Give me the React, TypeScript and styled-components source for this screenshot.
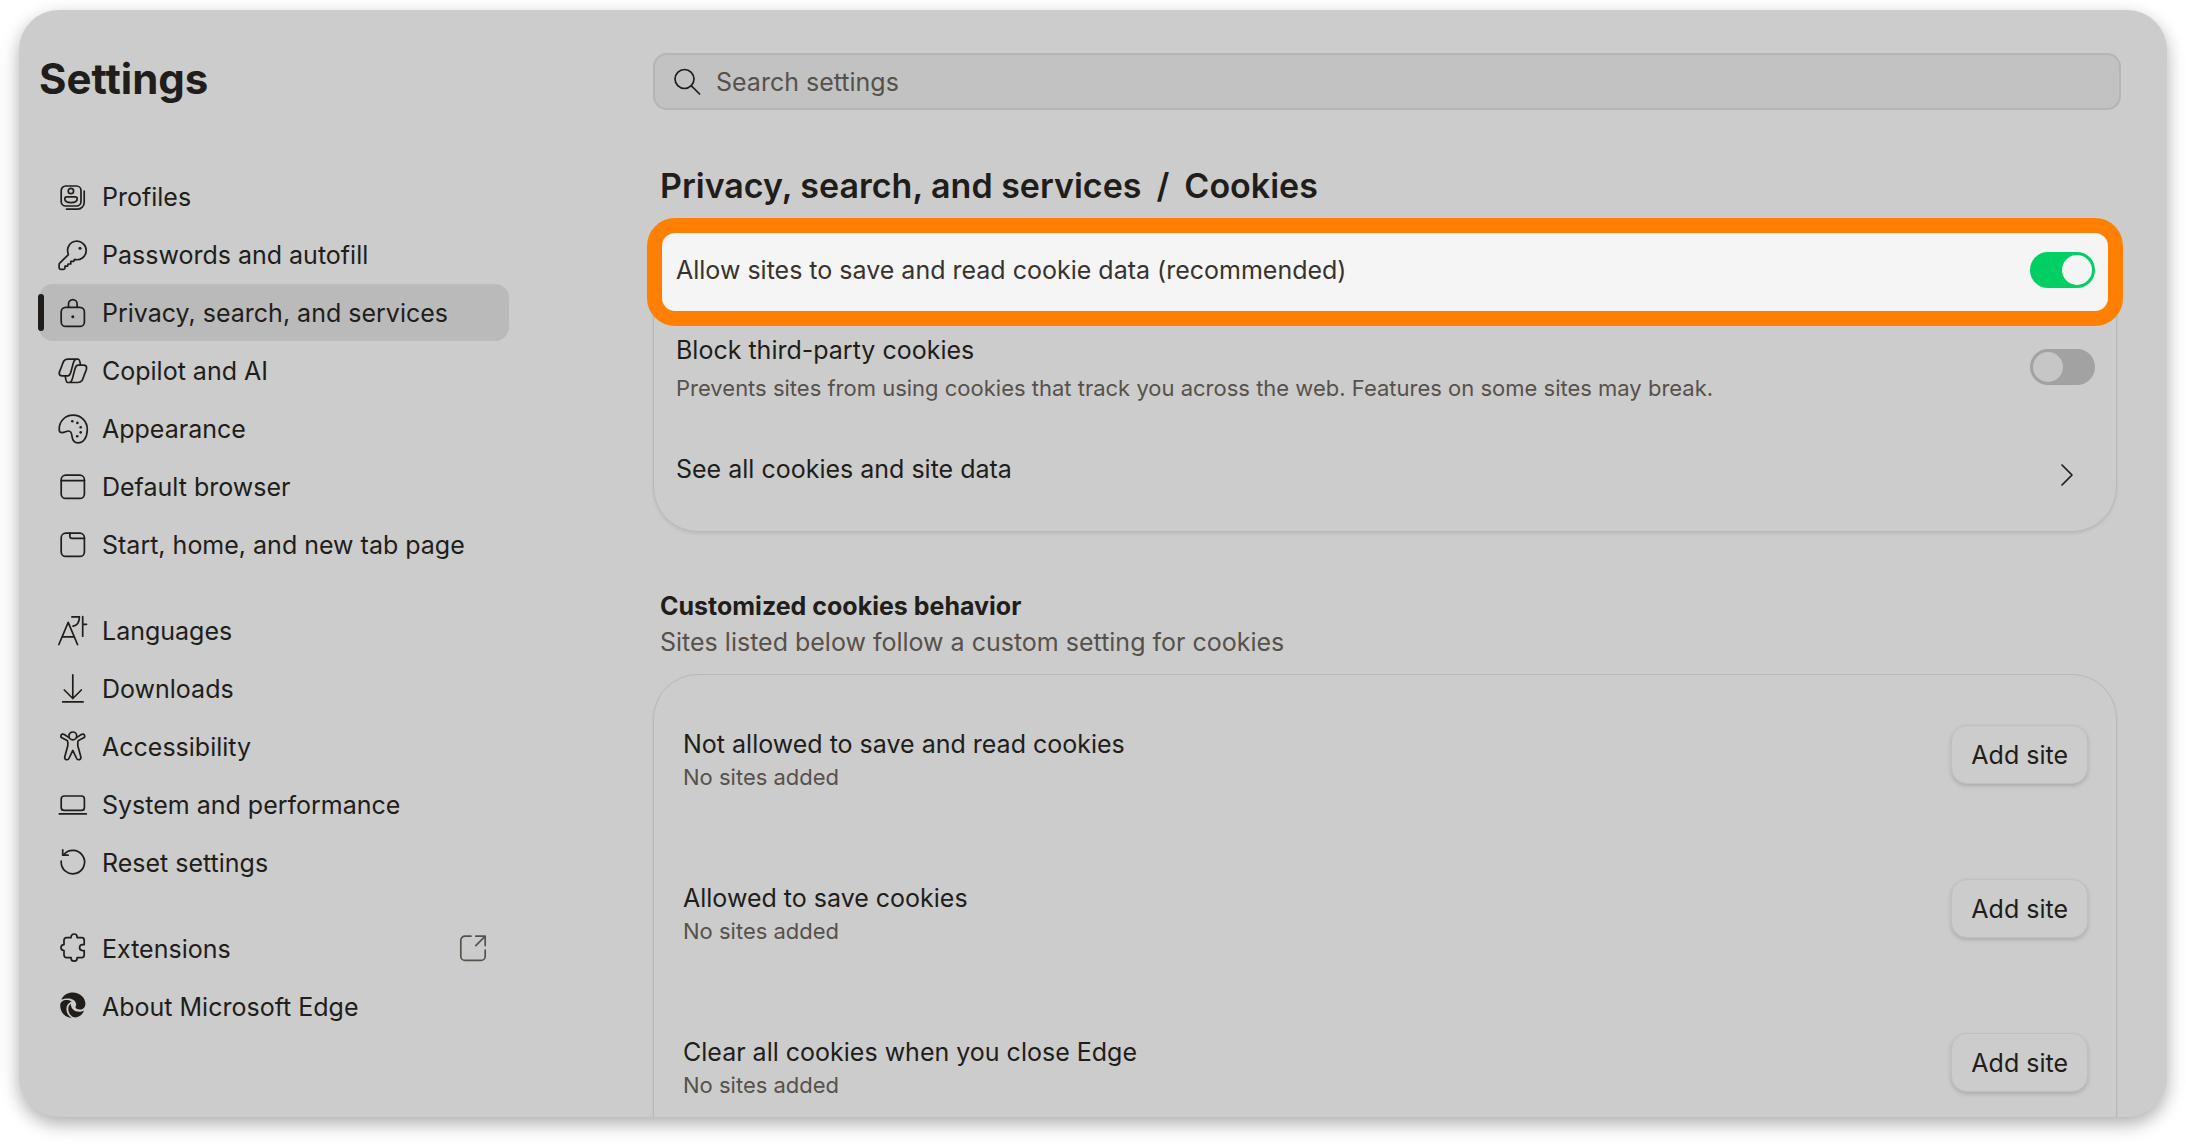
import React, { useState } from "react";
import type { ReactNode } from "react";
import styled, { createGlobalStyle, css } from "styled-components";

const ink = "#211d1a";
const muted = "#57514b";
const surface = "#cccccc";

const GlobalStyle = createGlobalStyle`
  *, *::before, *::after { box-sizing: border-box; }
  body {
    margin: 0;
    background: #ffffff;
    color: ${ink};
    font-family: Inter, "Liberation Sans", sans-serif;
    font-size: 25px;
  }
  h1, h2, h3, p, ul { margin: 0; padding: 0; }
  ul { list-style: none; }
`;

const Page = styled.div`
  height: 100vh;
  padding: 10px 19px 28px;
`;

const Window = styled.div`
  display: grid;
  grid-template-columns: 614px minmax(0, 1fr);
  height: 100%;
  overflow: hidden;
  border-radius: 40px;
  background: ${surface};
  box-shadow: 0 7px 18px rgba(0, 0, 0, 0.32);
`;

const Sidebar = styled.aside`
  padding: 45px 124px 0 20px;
`;

const AppTitle = styled.h1`
  margin-bottom: 65px;
  font-size: 42px;
  font-weight: 700;
  line-height: 48px;
`;

const Nav = styled.nav`
  display: flex;
  flex-direction: column;
  gap: 28px;
`;

const NavItem = styled.li`
  padding-bottom: 1px;
`;

const NavLink = styled.a<{ $active?: boolean }>`
  position: relative;
  display: flex;
  align-items: center;
  gap: 13px;
  height: 57px;
  padding: 0 20px 0 18px;
  border-radius: 14px;
  color: inherit;
  text-decoration: none;
  white-space: nowrap;
  ${(p) =>
    p.$active &&
    css`
      background: #bababa;
      &::before {
        content: "";
        position: absolute;
        left: -1px;
        top: 10px;
        bottom: 10px;
        width: 6px;
        border-radius: 3px;
        background: ${ink};
      }
    `}
`;

const NavText = styled.span`
  flex: 1;
`;

const Icon = styled.svg<{ $muted?: boolean }>`
  flex: none;
  width: 32px;
  height: 32px;
  fill: none;
  stroke: ${(p) => (p.$muted ? muted : ink)};
  stroke-width: 1.7;
  stroke-linecap: round;
  stroke-linejoin: round;
`;

const Main = styled.main`
  padding: 43px 46px 0 20px;
  overflow: hidden;
`;

const SearchBox = styled.label`
  display: flex;
  align-items: center;
  gap: 12px;
  height: 57px;
  padding: 0 17px;
  border: 2px solid #b5b5b5;
  border-radius: 14px;
  background: #c2c2c2;
`;

const SearchInput = styled.input`
  flex: 1;
  min-width: 0;
  padding: 0;
  border: 0;
  outline: 0;
  background: none;
  color: ${ink};
  font: inherit;
  &::placeholder {
    color: ${muted};
    opacity: 1;
  }
`;

const Content = styled.div`
  padding-right: 4px;
`;

const Breadcrumb = styled.h2`
  display: flex;
  gap: 15px;
  margin: 56px 0 20px;
  padding-left: 7px;
  font-size: 34px;
  font-weight: 600;
  line-height: 40px;
`;

const Card = styled.section`
  border: 1px solid #b8b8b8;
  border-radius: 45px;
  box-shadow: 0 2px 3px rgba(0, 0, 0, 0.08);
`;

const SettingRow = styled.div`
  display: flex;
  align-items: center;
  justify-content: space-between;
  min-height: 82px;
  padding: 0 21px 0 22px;
`;

const HighlightedRow = styled(SettingRow)`
  min-height: 108px;
  margin: -9px -7px 0;
  padding: 0 13px 4px 14px;
  border: 15px solid #ff8000;
  border-radius: 28px;
  background: #f5f5f5;
  color: #38322f;
`;

const Label = styled.label`
  display: block;
  line-height: 36px;
`;

const Description = styled.p`
  color: ${muted};
  font-size: 22px;
  line-height: 28px;
`;

const SpacedDescription = styled(Description)`
  padding-top: 6px;
`;

const Switch = styled.input`
  appearance: none;
  flex: none;
  display: flex;
  align-items: center;
  width: 65px;
  height: 36px;
  margin: 0;
  padding: 3px;
  border-radius: 18px;
  background: #a2a2a2;
  cursor: pointer;
  &::before {
    content: "";
    width: 30px;
    height: 30px;
    border-radius: 50%;
    background: #c6c6c6;
  }
  &:checked {
    justify-content: flex-end;
    background: #00cf64;
  }
  &:checked::before {
    background: #f5f5f5;
  }
`;

const RowLink = styled.a`
  display: flex;
  align-items: flex-start;
  justify-content: space-between;
  padding: 46px 21px 35px 22px;
  color: inherit;
  line-height: 30px;
  text-decoration: none;
`;

const ChevronBox = styled.span`
  display: flex;
  align-items: center;
  justify-content: center;
  width: 56px;
  height: 42px;
`;

const SectionHead = styled.header`
  margin: 56px 0 14px;
  padding-left: 7px;
  line-height: 36px;
`;

const SectionTitle = styled.h3`
  font-size: 25px;
  font-weight: 700;
`;

const SectionNote = styled.p`
  color: ${muted};
`;

const SiteCard = styled(Card)`
  padding-bottom: 60px;
`;

const SiteRow = styled.div`
  display: flex;
  align-items: flex-start;
  justify-content: space-between;
  padding: 50px 28px 38px 29px;
`;

const SiteTitle = styled.p`
  line-height: 38px;
`;

const AddButton = styled.button`
  height: 59px;
  padding: 0 19px;
  border: 1px solid #c0c0c0;
  border-radius: 16px;
  background: ${surface};
  box-shadow: 0 2px 4px rgba(0, 0, 0, 0.16);
  color: ${ink};
  font: inherit;
  cursor: pointer;
`;

function Glyph({ children, muted: isMuted }: { children: ReactNode; muted?: boolean }) {
  return (
    <Icon viewBox="0 0 32 32" aria-hidden="true" $muted={isMuted}>
      {children}
    </Icon>
  );
}

const icons: Record<string, ReactNode> = {
  profiles: (
    <>
      <rect x="4.2" y="5" width="19.8" height="20" rx="4.5" />
      <circle cx="13.9" cy="10" r="2.7" />
      <path d="M9.8 15.8h8.4c1.2 0 2 .8 2 2 0 2.4-2.6 3.9-6.2 3.9s-6.2-1.5-6.2-3.9c0-1.2.8-2 2-2z" />
      <path d="M27.2 10v11.5a6.600 6.600 0 0 1-6.600 6.600H9.500" />
    </>
  ),
  key: (
    <>
      <path d="M11.200 14.700A9.300 9.300 0 1 1 17.500 20.400L16.800 22.300h-3v2.700h-2.700l-.6 2.200H8v1.500c0 .9-.6 1.600-1.500 1.600H3.700c-.9 0-1.600-.7-1.600-1.600v-3.100c0-.6.2-1.100.6-1.500L11.400 15.600z" />
      <circle cx="23" cy="9.200" r="1.500" fill={ink} stroke="none" />
    </>
  ),
  lock: (
    <>
      <rect x="4.200" y="10.400" width="23.200" height="19" rx="4.500" />
      <path d="M11.500 10V7a4.300 4.300 0 0 1 8.600 0v3" />
      <circle cx="15.800" cy="19.800" r="1.500" fill={ink} stroke="none" />
    </>
  ),
  copilot: (
    <>
      <path d="M11 4.200h10c1.400 0 2 1.800 2.400 5.800M11 4.200C6.500 4.200 6 7.500 4.800 11S2.200 16.500 2.200 18.300s1.200 2.500 3 2.500h5.600c1.800 0 2.300-1.200 3-3.600l2.600-9.400c.6-2.200 1.200-3.600 3.200-3.600" />
      <path d="M20.800 27.500h-10c-1.400 0-2-1.800-2.600-6.600M20.800 27.500c4.500 0 5-3.300 6.200-6.800s2.600-5.500 2.600-7.700-1.200-2.800-3-2.800H21c-1.800 0-2.300 1.200-3 3.600l-2.600 9.800c-.6 2.200-1.200 3.900-3.200 3.900" />
    </>
  ),
  palette: (
    <>
      <path d="M2.200 17C1.800 8 8.500 2.200 16 2.200c8.500 0 14.300 6.500 14.300 14.300 0 8-4 13.300-9.300 13.300-4 0-5.500-2.500-6-6.500-.4-3.600-1-5.300-3.300-5.300-2.400 0-4 1.700-6.500 1.700-1.800 0-2.900-1-3-2.700z" />
      <g fill={ink} stroke="none">
        <circle cx="15.300" cy="8.200" r="1.300" />
        <circle cx="20.400" cy="9.900" r="1.300" />
        <circle cx="23.700" cy="14.200" r="1.300" />
        <circle cx="23.700" cy="19.400" r="1.300" />
        <circle cx="20.200" cy="23.200" r="1.300" />
      </g>
    </>
  ),
  browser: (
    <>
      <rect x="4.200" y="4.200" width="23.200" height="23.200" rx="4.500" />
      <path d="M4.200 9.600h23.200" />
    </>
  ),
  tab: (
    <>
      <rect x="4.200" y="4.200" width="23.200" height="23.200" rx="4.500" />
      <path d="M12.900 4.200v3.100c0 1.200.9 2.100 2.100 2.100h12.400" />
    </>
  ),
  languages: (
    <path d="M1.900 29.500 11.200 7.400l9.300 22.100M5 21.800h12.400M14.900 1.900h7.500c0 5-2 8.300-6.300 9.300M25.700 1.500v19.700M25.700 9.300h3.800" />
  ),
  download: <path d="M15.800 1.800v23.600M7.300 17l8.500 8.500 8.500-8.500M5.700 28.900h20.400" />,
  accessibility: (
    <>
      <circle cx="15.800" cy="4.900" r="3.900" />
      <path d="M12 6.600 7.300 3.500C5.800 2.600 4.400 3.200 4 4.400c-.4 1.200.1 2.100 1.300 2.700l4.400 2.200c.8.400 1.100 1 1.100 1.900v3.600L7.900 25.300c-.5 1.700 0 2.900 1.200 3.300 1.300.4 2.500-.1 3.100-1.600l3.600-7.600 3.600 7.600c.6 1.500 1.800 2 3.100 1.600 1.200-.4 1.700-1.600 1.200-3.300l-2.900-10.500v-3.600c0-.9.300-1.500 1.100-1.900l4.400-2.200c1.200-.6 1.700-1.500 1.300-2.700-.4-1.200-1.800-1.800-3.300-.9l-4.700 3.100" />
    </>
  ),
  system: (
    <>
      <rect x="4.200" y="7" width="23.200" height="14.400" rx="3" />
      <path d="M2.300 24.900h27" />
    </>
  ),
  reset: (
    <path d="M4.200 14.200A11.700 11.700 0 1 0 6.400 8.200M5.700 2.800v5.400h5.400" />
  ),
  extensions: (
    <path d="M9.500 4.600h4.600V4a3 3 0 0 1 6 0v.6h4.600c1.500 0 2.500 1 2.500 2.500v4.500h-1.600a3 3 0 0 0 0 6h1.600v4.500c0 1.500-1 2.500-2.500 2.500h-4.600v.6a3 3 0 0 1-6 0v-.6H9.500c-1.500 0-2.500-1-2.500-2.500v-4.500a3 3 0 0 1 0-6V7.100c0-1.500 1-2.500 2.500-2.500z" />
  ),
  edge: (
    <g stroke="none" fill={ink}>
      <path d="M4.300 8.600C6.500 4.200 10.800 1.600 15.800 1.600c7.200 0 12.600 5.400 12.600 11.200 0 3.600-2.500 5.800-5.600 5.800-2.800 0-4.300-1.100-4.300-2.300 0-.9.700-1.200.7-2.700 0-3.700-3.600-6.200-8-6.200-2.800 0-5 .4-6.900 1.200z" />
      <path d="M3.200 14.500c0-3.400 2.900-5.400 6.500-5.400 2.200 0 3.900.6 5 1.600-3 .6-5.300 3.700-5.300 7.400 0 4 2 7.200 5.300 8.700C8.300 26.800 3.200 21.300 3.200 14.500z" />
      <path d="M11.300 17.800c0-2 .9-3.900 2.400-5 .2 4.800 3.600 8 8.400 8 2 0 3.800-.5 5-1.300-1.500 3.900-5.200 6.900-8.700 6.900-4.100 0-7.100-4.200-7.100-8.600z" />
    </g>
  ),
};

type NavEntry = { icon: string; text: string; active?: boolean; external?: boolean };

const groups: NavEntry[][] = [
  [
    { icon: "profiles", text: "Profiles" },
    { icon: "key", text: "Passwords and autofill" },
    { icon: "lock", text: "Privacy, search, and services", active: true },
    { icon: "copilot", text: "Copilot and AI" },
    { icon: "palette", text: "Appearance" },
    { icon: "browser", text: "Default browser" },
    { icon: "tab", text: "Start, home, and new tab page" },
  ],
  [
    { icon: "languages", text: "Languages" },
    { icon: "download", text: "Downloads" },
    { icon: "accessibility", text: "Accessibility" },
    { icon: "system", text: "System and performance" },
    { icon: "reset", text: "Reset settings" },
  ],
  [
    { icon: "extensions", text: "Extensions", external: true },
    { icon: "edge", text: "About Microsoft Edge" },
  ],
];

const siteLists = [
  "Not allowed to save and read cookies",
  "Allowed to save cookies",
  "Clear all cookies when you close Edge",
];

export default function App() {
  const [allowCookies, setAllowCookies] = useState(true);
  const [blockThirdParty, setBlockThirdParty] = useState(false);

  return (
    <>
      <GlobalStyle />
      <Page>
        <Window>
          <Sidebar>
            <AppTitle>Settings</AppTitle>
            <Nav>
              {groups.map((group) => (
                <ul key={group[0].text}>
                  {group.map((item) => (
                    <NavItem key={item.text}>
                      <NavLink
                        href="#"
                        $active={item.active}
                        aria-current={item.active ? "page" : undefined}
                      >
                        <Glyph>{icons[item.icon]}</Glyph>
                        <NavText>{item.text}</NavText>
                        {item.external && (
                          <Glyph muted>
                            <path d="M14 3.200H8A4.200 4.200 0 0 0 3.800 7.400v15.800A4.200 4.200 0 0 0 8 27.400h16a4.200 4.200 0 0 0 4.200-4.200v-6M18.800 3.200h9.400v9.400M28 3.400l-9.200 9.200" />
                          </Glyph>
                        )}
                      </NavLink>
                    </NavItem>
                  ))}
                </ul>
              ))}
            </Nav>
          </Sidebar>

          <Main>
            <SearchBox>
              <Glyph>
                <circle cx="12.500" cy="13" r="9.500" />
                <path d="m19.400 19.800 8.200 8.200" />
              </Glyph>
              <SearchInput type="search" placeholder="Search settings" aria-label="Search settings" />
            </SearchBox>

            <Content>
              <Breadcrumb>
                <span>Privacy, search, and services</span>
                <span>/</span>
                <span>Cookies</span>
              </Breadcrumb>

              <Card>
                <HighlightedRow>
                  <Label htmlFor="allow-cookies">
                    Allow sites to save and read cookie data (recommended)
                  </Label>
                  <Switch
                    id="allow-cookies"
                    type="checkbox"
                    role="switch"
                    checked={allowCookies}
                    onChange={(e) => setAllowCookies(e.target.checked)}
                  />
                </HighlightedRow>
                <SettingRow>
                  <div>
                    <Label htmlFor="block-third-party">Block third-party cookies</Label>
                    <SpacedDescription>
                      Prevents sites from using cookies that track you across the web. Features on
                      some sites may break.
                    </SpacedDescription>
                  </div>
                  <Switch
                    id="block-third-party"
                    type="checkbox"
                    role="switch"
                    checked={blockThirdParty}
                    onChange={(e) => setBlockThirdParty(e.target.checked)}
                  />
                </SettingRow>
                <RowLink href="#">
                  <span>See all cookies and site data</span>
                  <ChevronBox>
                    <Glyph>
                      <path d="m11 6 10 10-10 10" />
                    </Glyph>
                  </ChevronBox>
                </RowLink>
              </Card>

              <SectionHead>
                <SectionTitle>Customized cookies behavior</SectionTitle>
                <SectionNote>Sites listed below follow a custom setting for cookies</SectionNote>
              </SectionHead>

              <SiteCard>
                {siteLists.map((title) => (
                  <SiteRow key={title}>
                    <div>
                      <SiteTitle>{title}</SiteTitle>
                      <Description>No sites added</Description>
                    </div>
                    <AddButton type="button">Add site</AddButton>
                  </SiteRow>
                ))}
              </SiteCard>
            </Content>
          </Main>
        </Window>
      </Page>
    </>
  );
}
